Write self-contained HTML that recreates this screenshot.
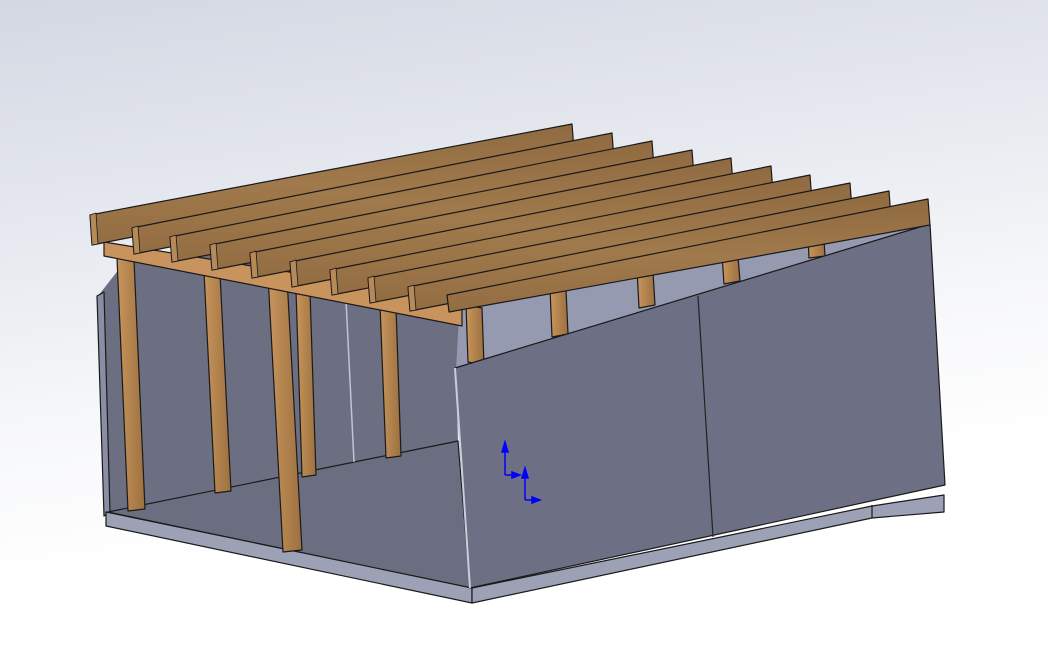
<!DOCTYPE html>
<html><head><meta charset="utf-8"><style>
html,body{margin:0;padding:0;width:1048px;height:647px;overflow:hidden}
body{background:linear-gradient(172deg,#d4d8e3 0%,#e6e9ef 30%,#f7f8fa 55%,#ffffff 75%)}
svg{position:absolute;left:0;top:0}
</style></head><body>
<svg width="1048" height="647" viewBox="0 0 1048 647">
<defs>
<linearGradient id="w" x1="0" y1="0" x2="0" y2="1"><stop offset="0" stop-color="#8f6a40"/><stop offset="0.5" stop-color="#a07a4c"/><stop offset="1" stop-color="#936d42"/></linearGradient>
<linearGradient id="p" x1="0" y1="0" x2="1" y2="0"><stop offset="0" stop-color="#c8955c"/><stop offset="1" stop-color="#9c703f"/></linearGradient>
</defs>
<g stroke="#1a1a1a" stroke-width="1.2" stroke-linejoin="round">
<polygon points="98,296 130,255 930,224 456,370 458,441 110,512" fill="#6c6f82" stroke="none"/>
<polygon points="460,300 920,210 930,224 456,370" fill="#959ab1" stroke="none"/>
<line x1="456" y1="368" x2="930" y2="224" stroke="#2a2a2a"/>
<polygon points="97,296 104,292 110,512 104,516" fill="#8a8ea4"/>
<polygon points="108,512 458,441 470,588" fill="#6b6e80"/>
<polygon points="106,512 472,588 472,603 106,526" fill="#9da1b6"/>
<polygon points="472,588 872,506 944,495 944,512 872,518 472,603" fill="#9da1b6"/>
<line x1="872" y1="505" x2="872" y2="518"/>
<polygon points="296,290 310,292 316,475 302,477" fill="url(#p)"/>
<polygon points="380,305 396,307 401,456 386,458" fill="url(#p)"/>
<polygon points="466,305 482,308 484,365 468,362" fill="url(#p)"/>
<polygon points="550,288 566,290 568,334 552,337" fill="url(#p)"/>
<polygon points="637,270 653,272 655,305 639,308" fill="url(#p)"/>
<polygon points="722,255 738,257 740,281 724,284" fill="url(#p)"/>
<polygon points="808,238 824,240 825,256 809,258" fill="url(#p)"/>
<line x1="346" y1="300" x2="354" y2="462" stroke="#c0c4d4" stroke-width="1.5"/>
<polygon points="117,258 134,260 145,509 128,511" fill="url(#p)"/>
<polygon points="204,272 220,274 231,491 215,493" fill="url(#p)"/>
<polygon points="455,368 930,224 945,485 470,588" fill="#6d7084"/>
<line x1="698" y1="296" x2="713" y2="537" stroke="#222"/>
<line x1="455" y1="368" x2="470" y2="588" stroke="#ccd" stroke-width="2"/>
<polygon points="268,276 287,278 302,550 283,552" fill="url(#p)"/>
<polygon points="104,242 462,300 462,326 104,256" fill="#c8935c"/>
<g fill="url(#w)">
<polygon points="90,215 572,124 574,150 92,245"/>
<polygon points="132,228 612,133 614,160 134,254"/>
<polygon points="170,237 652,141 654,168 172,262"/>
<polygon points="210,245 692,150 694,177 212,270"/>
<polygon points="250,253 731,158 733,185 252,278"/>
<polygon points="290,262 771,166 773,193 292,287"/>
<polygon points="330,270 810,175 812,202 332,295"/>
<polygon points="368,278 850,183 852,210 370,303"/>
<polygon points="408,287 889,191 891,218 410,311"/>
<polygon points="447,295 928,199 930,225 449,312"/>
</g>
<g fill="#b58a58" stroke-width="0.8">
<polygon points="90,215 96,213 98,244 92,245"/>
<polygon points="132,228 138,226 140,253 134,254"/>
<polygon points="170,237 176,235 178,261 172,262"/>
<polygon points="210,245 216,243 218,269 212,270"/>
<polygon points="250,253 256,251 258,277 252,278"/>
<polygon points="290,262 296,260 298,286 292,287"/>
<polygon points="330,270 336,268 338,294 332,295"/>
<polygon points="368,278 374,276 376,302 370,303"/>
<polygon points="408,287 414,285 416,310 410,311"/>
</g>
</g>
<g stroke="#0000ff" stroke-width="1.5" fill="#0000ff">
<line x1="505" y1="475" x2="505" y2="448"/><polygon points="502,452 505,442 508,452"/>
<line x1="505" y1="475" x2="515" y2="475"/><polygon points="512,472 520,475 512,478"/>
<line x1="525" y1="500" x2="525" y2="474"/><polygon points="522,478 525,468 528,478"/>
<line x1="525" y1="500" x2="535" y2="500"/><polygon points="532,497 540,500 532,503"/>
</g>
</svg>
</body></html>
